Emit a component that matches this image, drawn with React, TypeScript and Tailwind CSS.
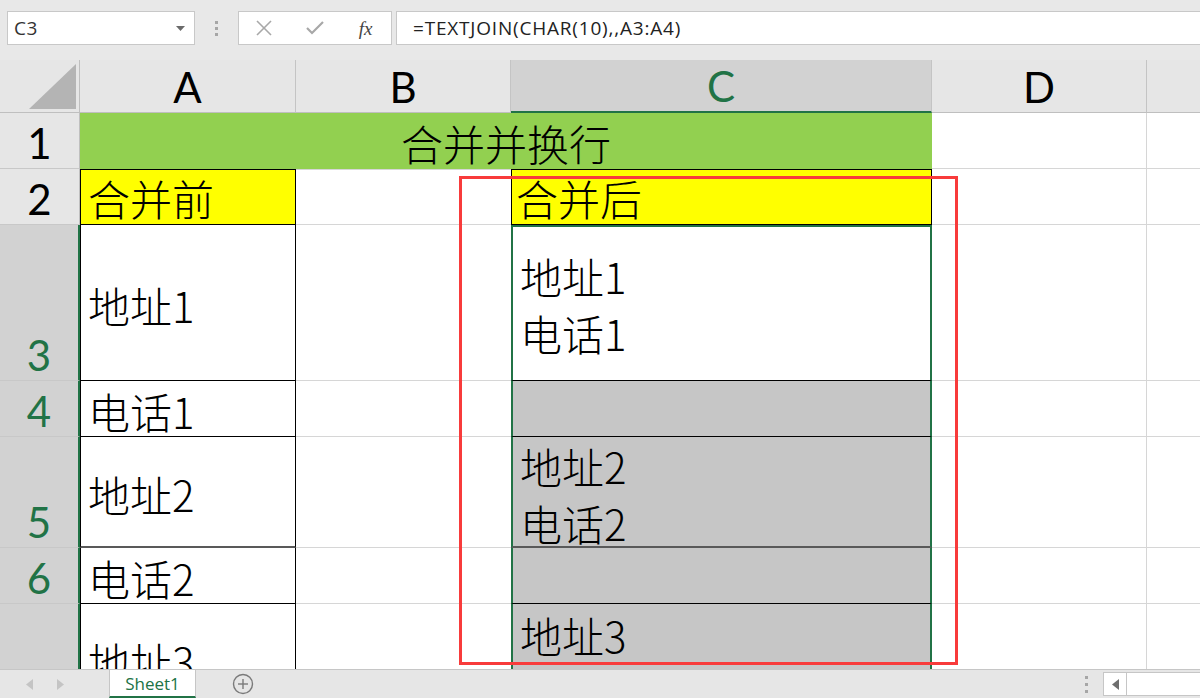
import React from 'react';

const GRID = 'border-[#d6d6d6]';

function RowHead({ n, active }: { n: number; active?: boolean }) {
  return (
    <div
      className={
        (active
          ? 'bg-[#d2d2d2] text-[#217346] border-r-2 border-r-[#217346]'
          : 'bg-[#e6e6e6] text-black border-r border-r-[#bfbfbf]') +
        " border-b border-b-[#c8c8c8] flex items-end justify-center pb-[4px] text-[42px] leading-none font-normal font-['Lato',sans-serif]"
      }
    >
      {n}
    </div>
  );
}

function ColHead({ label, active, last }: { label: string; active?: boolean; last?: boolean }) {
  return (
    <div
      className={
        (active
          ? 'bg-[#d2d2d2] text-[#217346] border-b-2 border-b-[#217346]'
          : 'bg-[#e6e6e6] text-black border-b border-b-[#bfbfbf]') +
        (last ? '' : ' border-r border-r-[#c4c4c4]') +
        " flex items-end justify-center pb-[4px] text-[42px] leading-none font-normal font-['Lato',sans-serif]"
      }
    >
      {label}
    </div>
  );
}

function Toolbar() {
  return (
    <div className="h-[60px] shrink-0 bg-[#e8e8e8] flex items-start pt-[11px] pl-[7px] font-['Open_Sans',sans-serif]">
      <div className="w-[188px] h-[34px] bg-white border border-[#c8c8c8] flex items-center justify-between pl-[6px] pr-[9px]">
        <span className="text-[19px] tracking-[0.5px] text-[#333] leading-none">C3</span>
        <svg width="9" height="5" viewBox="0 0 9 5">
          <polygon points="0,0 9,0 4.5,5" fill="#6a6a6a" />
        </svg>
      </div>
      <div className="w-[43px] h-[34px] flex flex-col items-center justify-center gap-[3px]">
        <div className="w-[3px] h-[3px] bg-[#a6a6a6]" />
        <div className="w-[3px] h-[3px] bg-[#a6a6a6]" />
        <div className="w-[3px] h-[3px] bg-[#a6a6a6]" />
      </div>
      <div className="w-[154px] h-[34px] bg-white border border-[#c8c8c8] flex items-center">
        <div className="w-[51px] flex justify-center">
          <svg width="18" height="18" viewBox="0 0 18 18">
            <line x1="2" y1="2" x2="16" y2="16" stroke="#a8a8a8" strokeWidth="1.6" />
            <line x1="16" y1="2" x2="2" y2="16" stroke="#a8a8a8" strokeWidth="1.6" />
          </svg>
        </div>
        <div className="w-[51px] flex justify-center">
          <svg width="20" height="18" viewBox="0 0 20 18">
            <polyline points="2,9 7,14 18,3" fill="none" stroke="#a8a8a8" strokeWidth="2.2" />
          </svg>
        </div>
        <div className="w-[51px] flex justify-center">
          <span className="font-['Liberation_Serif',serif] italic text-[19px] text-[#444] leading-none">fx</span>
        </div>
      </div>
      <div className="ml-[4px] flex-1 h-[34px] bg-white border border-r-0 border-[#c8c8c8] flex items-center pl-[16px]">
        <span className="text-[19px] tracking-[0.8px] text-[#222] leading-none">=TEXTJOIN(CHAR(10),,A3:A4)</span>
      </div>
    </div>
  );
}

function Sheet() {
  const cjk = "font-['Noto_Sans_CJK_SC',sans-serif] font-light text-[42px] leading-none text-black";
  return (
    <div className="relative h-[609px] shrink-0 overflow-hidden">
      <div className="grid grid-cols-[80px_216px_215px_421px_215px_1fr] grid-rows-[53px_56px_56px_156px_56px_111px_56px_111px]">
        {/* header */}
        <div className="bg-[#e6e6e6] border-r border-b border-[#bfbfbf] flex items-end justify-end pr-[3px] pb-[3px]">
          <svg width="47" height="45" viewBox="0 0 47 45">
            <polygon points="47,0 47,45 0,45" fill="#b4b4b4" />
          </svg>
        </div>
        <ColHead label="A" />
        <ColHead label="B" />
        <ColHead label="C" active />
        <ColHead label="D" />
        <ColHead label="" last />

        {/* row 1 */}
        <RowHead n={1} />
        <div className={'col-span-3 bg-[#92d050] flex items-center justify-center pt-[4px] ' + cjk}>合并并换行</div>
        <div className={'border-r border-b ' + GRID} />
        <div className={'border-b ' + GRID} />

        {/* row 2 */}
        <RowHead n={2} />
        <div className={'bg-[#ffff00] border border-black flex items-center pl-[7px] pt-[1px] ' + cjk}>合并前</div>
        <div className={'border-t border-b ' + GRID} />
        <div className={'bg-[#ffff00] border border-black flex items-center pl-[4px] pt-[1px] ' + cjk}>合并后</div>
        <div className={'border-r border-b ' + GRID} />
        <div className={'border-b ' + GRID} />

        {/* row 3 */}
        <RowHead n={3} active />
        <div className={'bg-white border-x border-b border-black flex items-center pl-[7px] pt-[4px] ' + cjk}>地址1</div>
        <div className={'border-b ' + GRID} />
        <div className={"bg-white border-x-2 border-t-2 border-x-[#217346] border-t-[#217346] border-b border-b-black flex flex-col justify-center pl-[7px] font-['Noto_Sans_CJK_SC',sans-serif] font-light text-[42px] leading-[57px] text-black"}>
          <span>地址1</span>
          <span>电话1</span>
        </div>
        <div className={'border-r border-b ' + GRID} />
        <div className={'border-b ' + GRID} />

        {/* row 4 */}
        <RowHead n={4} active />
        <div className={'bg-white border-x border-b border-black flex items-center pl-[7px] pt-[4px] ' + cjk}>电话1</div>
        <div className={'border-b ' + GRID} />
        <div className="bg-[#c6c6c6] border-x-2 border-x-[#217346] border-b border-b-black" />
        <div className={'border-r border-b ' + GRID} />
        <div className={'border-b ' + GRID} />

        {/* row 5 */}
        <RowHead n={5} active />
        <div className={'bg-white border-x border-x-black border-b-2 border-b-[#595959] flex items-center pl-[7px] pt-[4px] ' + cjk}>地址2</div>
        <div className={'border-b ' + GRID} />
        <div className={"bg-[#c6c6c6] border-x-2 border-x-[#217346] border-b-2 border-b-[#595959] flex flex-col justify-center pl-[7px] pt-[4px] font-['Noto_Sans_CJK_SC',sans-serif] font-light text-[42px] leading-[57px] text-black"}>
          <span>地址2</span>
          <span>电话2</span>
        </div>
        <div className={'border-r border-b ' + GRID} />
        <div className={'border-b ' + GRID} />

        {/* row 6 */}
        <RowHead n={6} active />
        <div className={'bg-white border-x border-b border-black flex items-center pl-[7px] pt-[4px] ' + cjk}>电话2</div>
        <div className={'border-b ' + GRID} />
        <div className="bg-[#c6c6c6] border-x-2 border-x-[#217346] border-b border-b-black" />
        <div className={'border-r border-b ' + GRID} />
        <div className={'border-b ' + GRID} />

        {/* row 7 */}
        <RowHead n={7} active />
        <div className={'bg-white border-x border-b border-black flex items-center pl-[7px] pt-[4px] ' + cjk}>地址3</div>
        <div className={'border-b ' + GRID} />
        <div className={"bg-[#c6c6c6] border-x-2 border-x-[#217346] border-b border-b-black flex flex-col justify-center pl-[7px] pt-[8px] font-['Noto_Sans_CJK_SC',sans-serif] font-light text-[42px] leading-[57px] text-black"}>
          <span>地址3</span>
          <span>电话3</span>
        </div>
        <div className={'border-r border-b ' + GRID} />
        <div className={'border-b ' + GRID} />
      </div>

      {/* red highlight rectangle */}
      <div className="absolute left-[459px] top-[116px] w-[499px] h-[489px] border-[3px] border-[#f83b3b] pointer-events-none" />
    </div>
  );
}

function BottomBar() {
  return (
    <div className="h-[29px] shrink-0 bg-[#e6e6e6] border-t border-[#c6c6c6] flex items-stretch font-['Open_Sans',sans-serif]">
      <div className="w-[109px] flex items-center">
        <svg className="ml-[26px]" width="7" height="11" viewBox="0 0 7 11">
          <polygon points="7,0 7,11 0,5.5" fill="#c4c4c4" />
        </svg>
        <svg className="ml-[24px]" width="7" height="11" viewBox="0 0 7 11">
          <polygon points="0,0 0,11 7,5.5" fill="#c4c4c4" />
        </svg>
      </div>
      <div className="w-[87px] bg-white border-x border-[#c6c6c6] border-b-2 border-b-[#217346] flex items-center justify-center">
        <span className="text-[17px] text-[#217346] leading-none">Sheet1</span>
      </div>
      <div className="ml-[36px] w-[22px] flex items-center">
        <svg width="22" height="22" viewBox="0 0 22 22">
          <circle cx="11" cy="11" r="9.5" fill="none" stroke="#7a7a7a" strokeWidth="1.4" />
          <line x1="11" y1="6" x2="11" y2="16" stroke="#7a7a7a" strokeWidth="1.4" />
          <line x1="6" y1="11" x2="16" y2="11" stroke="#7a7a7a" strokeWidth="1.4" />
        </svg>
      </div>
      <div className="flex-1" />
      <div className="w-[120px] flex items-center">
        <div className="w-[12px] flex flex-col items-center gap-[4px]">
          <div className="w-[3px] h-[3px] bg-[#a6a6a6]" />
          <div className="w-[3px] h-[3px] bg-[#a6a6a6]" />
          <div className="w-[3px] h-[3px] bg-[#a6a6a6]" />
        </div>
        <div className="ml-[11px] w-[24px] h-[24px] bg-white border border-[#c6c6c6] flex items-center justify-center">
          <svg width="7" height="11" viewBox="0 0 7 11">
            <polygon points="7,0 7,11 0,5.5" fill="#6e6e6e" />
          </svg>
        </div>
        <div className="flex-1 h-[24px] bg-white border-y border-[#c6c6c6]" />
      </div>
    </div>
  );
}

export default function App() {
  return (
    <div className="w-[1200px] h-[698px] overflow-hidden flex flex-col bg-white">
      <Toolbar />
      <Sheet />
      <BottomBar />
    </div>
  );
}
